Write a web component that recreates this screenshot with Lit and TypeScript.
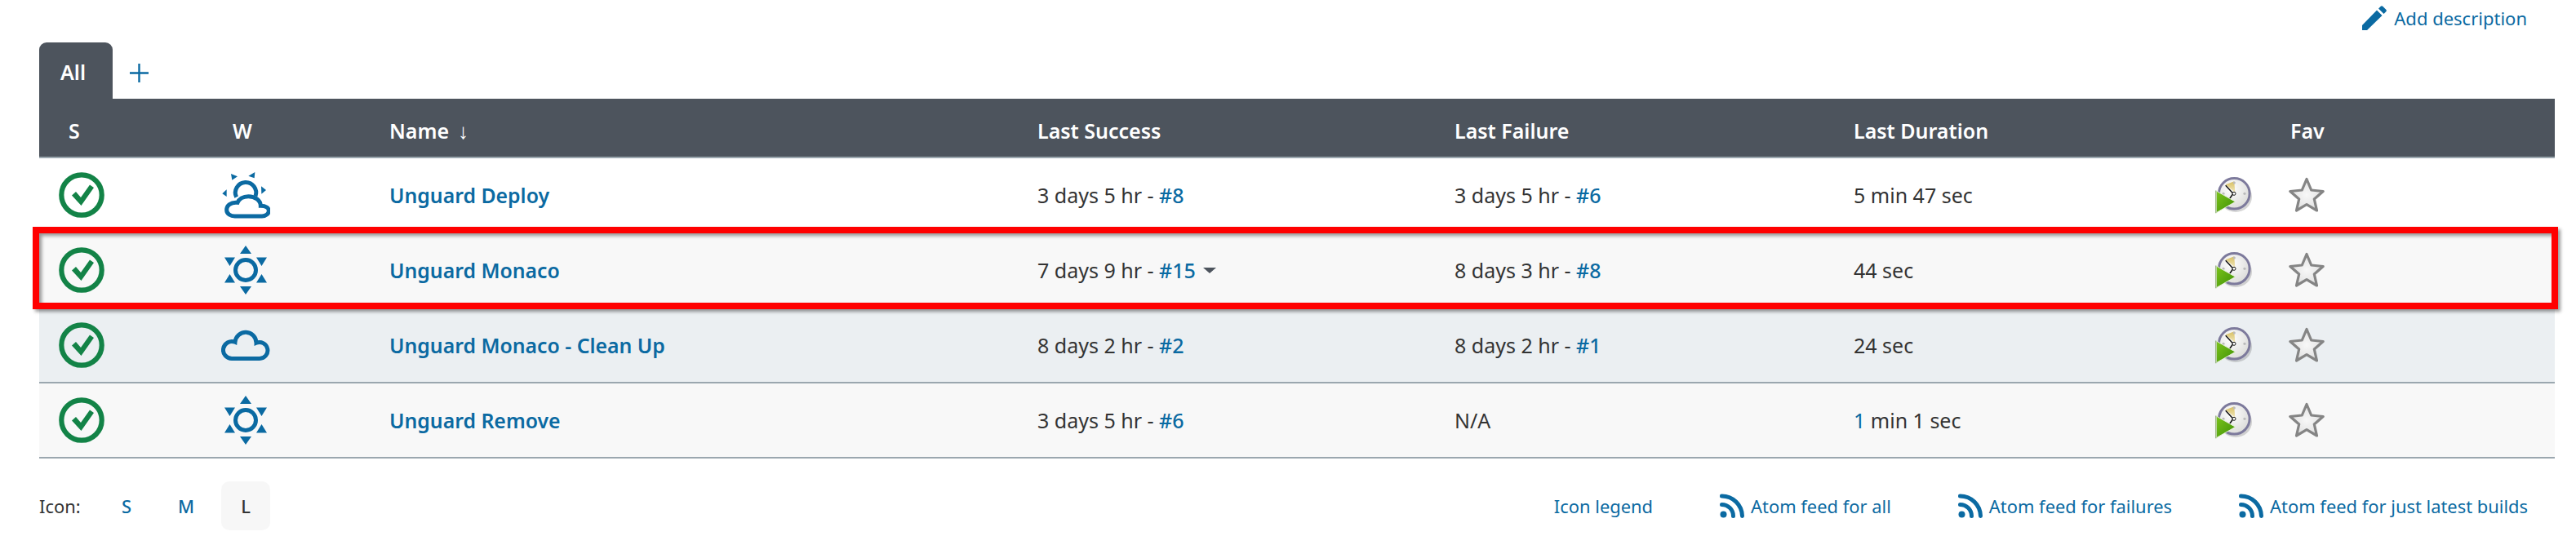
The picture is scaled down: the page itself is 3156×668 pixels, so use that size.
import { LitElement, html, css } from "lit";
import { customElement } from "lit/decorators.js";

const check = html`<svg class="status" viewBox="0 0 56 56" width="56" height="56"><circle cx="28" cy="28" r="24.7" fill="none" stroke="#138347" stroke-width="6.2"/><path d="M16 28.500l5-4.500 6 7 11-15.500 5 3.500-15.500 22z" fill="#138347"/></svg>`;

const sun = html`<svg class="weather" viewBox="0 0 60 60" width="60" height="60"><circle cx="30" cy="30" r="12.500" fill="none" stroke="#0b6aa2" stroke-width="5"/><path fill="#0b6aa2" d="M30 0l7 10H23zM30 60l7-10H23zM4 14.500h13L10.500 25zM56 14.500H43L49.500 25zM4 45.500h13L10.500 35zM56 45.500H43L49.500 35z"/></svg>`;

const cloudSun = html`<svg class="weather" viewBox="90 60 180 180" width="60" height="60"><path fill="#0b6aa2" d="M126 72l24 10-20 13zM214 66l-24 14 22 8zM237 118l18 14-17 14zM110 130l-16 15 16 11z"/><path d="M146 158A38 38 0 1 1 216 154" fill="none" stroke="#0b6aa2" stroke-width="15"/><path d="M140 228H240C255 228 265 218 265 208C265 198 255 190 235 190C235 170 215 155 190 155C170 155 155 165 150 178C125 175 110 190 110 205C110 220 125 228 140 228Z" fill="#fff" stroke="#0b6aa2" stroke-width="15"/></svg>`;

const cloud = html`<svg class="weather" viewBox="0 0 60 38" width="60" height="38"><path d="M13 35.500H47A10 10 0 1 0 43 16.300A13.020 13.020 0 0 0 17 15.300A10.500 10.500 0 1 0 13 35.500Z" fill="none" stroke="#0b6aa2" stroke-width="5"/></svg>`;

const clock = html`<svg class="icon48" viewBox="0 0 48 48" width="48" height="48">
  <defs>
    <radialGradient id="face" cx="0.4" cy="0.35" r="0.8"><stop offset="0" stop-color="#fff"/><stop offset="1" stop-color="#d5d5d2"/></radialGradient>
    <linearGradient id="play" x1="0" y1="0" x2="1" y2="1"><stop offset="0" stop-color="#7cc41c"/><stop offset="1" stop-color="#3d8f06"/></linearGradient>
    <linearGradient id="wedge" x1="0" y1="0" x2="0" y2="1"><stop offset="0" stop-color="#d8bf5f"/><stop offset="1" stop-color="#f1e8c0"/></linearGradient>
  </defs>
  <ellipse cx="25" cy="26" rx="20" ry="19" fill="#000" opacity=".16"/>
  <circle cx="23.300" cy="22.300" r="18.800" fill="url(#face)" stroke="#7d7a9c" stroke-width="3"/>
  <path d="M12.700 11.300L23.300 7.300 24.300 21z" fill="url(#wedge)"/>
  <g fill="#bbb"><circle cx="23.300" cy="9" r="1.600"/><circle cx="36" cy="22.300" r="1.600"/><circle cx="10" cy="22.300" r="1.600"/></g>
  <path d="M12.700 12.300L22 22.300 16 30.700" fill="none" stroke="#111" stroke-width="1.500"/>
  <circle cx="23" cy="22.300" r="2" fill="#fff" stroke="#111" stroke-width="1"/>
  <path d="M1.300 19V45.700L24.700 32.300z" fill="url(#play)" stroke="#e9f3dc" stroke-width="1"/>
  <path d="M.8 18.500V46.300" stroke="#5f8a3a" stroke-width=".8"/>
</svg>`;

const star = html`<svg class="icon48" viewBox="0 0 48 48" width="48" height="48">
  <defs><radialGradient id="st" cx="0.5" cy="0.5" r="0.6"><stop offset="0" stop-color="#f8f8f8"/><stop offset="1" stop-color="#dcdcdc"/></radialGradient></defs>
  <path d="M24 4.500L29.700 18 44.200 19.500 33.300 29 36.500 43 24 35.600 11.500 43 14.700 29 3.800 19.500 18.300 18z" fill="url(#st)" stroke="#858585" stroke-width="3.200" stroke-linejoin="round"/>
</svg>`;

const rss = html`<svg class="rss" viewBox="0 0 30 30" width="30" height="30"><circle cx="4.500" cy="25.500" r="4" fill="#0b6aa2"/><path d="M2.500 13.500A14 14 0 0 1 16.500 27.500M2.500 3A25 25 0 0 1 27.500 27.500" fill="none" stroke="#0b6aa2" stroke-width="5" stroke-linecap="round"/></svg>`;

const pencil = html`<svg class="pencil" viewBox="0 0 30 30" width="30" height="30"><path fill="#0b6aa2" d="M0 24L18 5.500 24.500 12 6 30H0zM20 3.500L22.500 1a2 2 0 0 1 3 0L29 4.500a2 2 0 0 1 0 3L26.500 10z"/></svg>`;

interface Row {
  name: string; w: unknown; s: string; sn: string; caret?: boolean;
  f: string; fn?: string; d: string; alt: string;
}

const rows: Row[] = [
  { name: "Unguard Deploy", w: cloudSun, s: "3 days 5 hr - ", sn: "#8", f: "3 days 5 hr - ", fn: "#6", d: "5 min 47 sec", alt: "a" },
  { name: "Unguard Monaco", w: sun, s: "7 days 9 hr - ", sn: "#15", caret: true, f: "8 days 3 hr - ", fn: "#8", d: "44 sec", alt: "b" },
  { name: "Unguard Monaco - Clean Up", w: cloud, s: "8 days 2 hr - ", sn: "#2", f: "8 days 2 hr - ", fn: "#1", d: "24 sec", alt: "c" },
  { name: "Unguard Remove", w: sun, s: "3 days 5 hr - ", sn: "#6", f: "N/A", d: "1 min 1 sec", alt: "b" },
];

@customElement("app-root")
export class AppRoot extends LitElement {
  static styles = css`
    :host {
      display: block;
      position: relative;
      width: 3156px;
      height: 668px;
      background: #fff;
      color: #333;
      font-family: "Noto Sans", "Open Sans", sans-serif;
      font-size: 25px;
      overflow: hidden;
    }
    a, .link { color: #0b6aa2; text-decoration: none; }
    .top {
      height: 52px;
      display: flex;
      justify-content: flex-end;
      align-items: flex-start;
      padding: 7px 60px 0 0;
      box-sizing: border-box;
    }
    .add { display: flex; align-items: center; gap: 9px; font-size: 22px; font-weight: 400; height: 30px; }
    .tabs { height: 69px; margin-left: 48px; display: flex; }
    .tab {
      width: 90px;
      background: #4d545d;
      color: #fff;
      font-weight: 600;
      border-radius: 9px 9px 0 0;
      padding: 20px 0 0 26px;
      box-sizing: border-box;
      line-height: 32px;
    }
    .plus { margin: 26px 0 0 21px; display: block; }
    .row {
      display: grid;
      grid-template-columns: 223px 206px 794px 511px 489px 443px 88px 328px;
      width: 3082px;
      margin-left: 48px;
      align-items: center;
      box-sizing: border-box;
      height: 92px;
      border-bottom: 2px solid #9ba7af;
    }
    .head {
      height: 73px;
      background: #4d545d;
      color: #fff;
      font-weight: 600;
      padding-top: 6px;
    }
    .head .s { padding-left: 36px; }
    .head .w { padding-left: 14px; }
    .head .f { padding-left: 4px; }
    .arrow { font-weight: 400; margin-left: 11px; font-size: 26px; }
    .a { background: #fff; }
    .b { background: #f8f8f8; }
    .c { background: #ebeff2; }
    .status { margin-left: 24px; display: block; }
    .weatherbox { width: 60px; height: 60px; display: flex; align-items: center; justify-content: center; }
    .weather, .icon48, .status, .rss, .pencil, .plus { flex: none; }
    .icon48 { display: block; }
    .name { font-weight: 600; font-size: 24.8px; }
    .num { font-weight: 500; }
    .caret {
      display: inline-block;
      margin: 0 0 6px 9px;
      border-left: 8px solid transparent;
      border-right: 8px solid transparent;
      border-top: 7px solid #4d545d;
      vertical-align: middle;
    }
    .footer {
      margin: 28px 0 0 48px;
      width: 3049px;
      height: 60px;
      display: flex;
      align-items: center;
      font-size: 21.9px;
    }
    .sizes { display: flex; align-items: center; }
    .label { width: 77px; }
    .size {
      width: 60px;
      height: 60px;
      margin-right: 13px;
      display: flex;
      align-items: center;
      justify-content: center;
      font-weight: 500;
      color: #0b6aa2;
      border-radius: 10px;
    }
    .size.on { background: #f7f7f7; color: #333; }
    .links { margin-left: auto; display: flex; align-items: center; gap: 82px; }
    .feed { display: flex; align-items: center; gap: 8px; }
    .mark {
      position: absolute;
      left: 40px;
      top: 278px;
      width: 3094px;
      height: 101px;
      box-sizing: border-box;
      border: 8px solid #f00;
      box-shadow: 3px 3px 4px rgba(0,0,0,.4), inset 3px 3px 4px rgba(0,0,0,.4);
      pointer-events: none;
    }
  `;

  render() {
    return html`
      <div class="top"><a class="add" href="#">${pencil}<span>Add description</span></a></div>
      <div class="tabs">
        <div class="tab">All</div>
        <svg class="plus" viewBox="0 0 23 23" width="23" height="23"><path d="M11.500 0V23M0 11.500H23" stroke="#0b6aa2" stroke-width="2.400"/></svg>
      </div>
      <div class="row head">
        <div class="s">S</div><div class="w">W</div>
        <div>Name<span class="arrow">↓</span></div>
        <div>Last Success</div><div>Last Failure</div><div>Last Duration</div><div></div>
        <div class="f">Fav</div>
      </div>
      ${rows.map((r) => html`
        <div class="row ${r.alt}">
          <div>${check}</div>
          <div class="weatherbox">${r.w}</div>
          <div><a class="name" href="#">${r.name}</a></div>
          <div>${r.s}<a class="num" href="#">${r.sn}</a>${r.caret ? html`<span class="caret"></span>` : ""}</div>
          <div>${r.f}${r.fn ? html`<a class="num" href="#">${r.fn}</a>` : ""}</div>
          <div>${r.d === "1 min 1 sec" ? html`<span class="link">1</span> min 1 sec` : r.d}</div>
          <div>${clock}</div>
          <div>${star}</div>
        </div>`)}
      <div class="footer">
        <div class="sizes">
          <span class="label">Icon:</span>
          <span class="size">S</span><span class="size">M</span><span class="size on">L</span>
        </div>
        <div class="links">
          <a class="legend" href="#">Icon legend</a>
          <a class="feed" href="#">${rss}<span>Atom feed for all</span></a>
          <a class="feed" href="#">${rss}<span>Atom feed for failures</span></a>
          <a class="feed" href="#">${rss}<span>Atom feed for just latest builds</span></a>
        </div>
      </div>
      <div class="mark"></div>
    `;
  }
}
